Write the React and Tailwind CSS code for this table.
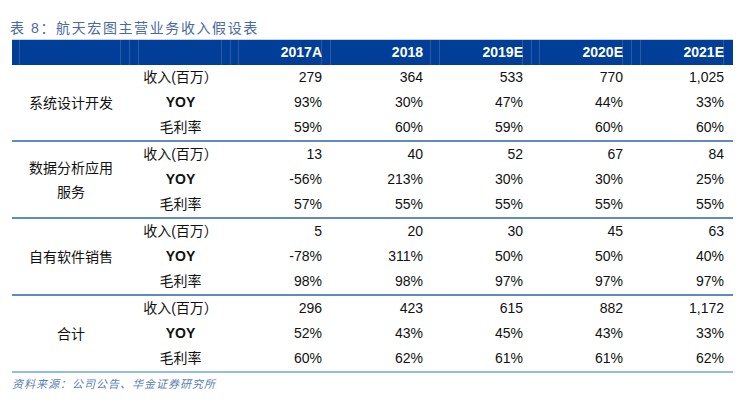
import React from "react";

const years = ["2017A", "2018", "2019E", "2020E", "2021E"];

const groups = [
  {
    name: ["系统设计开发"],
    rows: [
      ["279", "364", "533", "770", "1,025"],
      ["93%", "30%", "47%", "44%", "33%"],
      ["59%", "60%", "59%", "60%", "60%"],
    ],
  },
  {
    name: ["数据分析应用", "服务"],
    rows: [
      ["13", "40", "52", "67", "84"],
      ["-56%", "213%", "30%", "30%", "25%"],
      ["57%", "55%", "55%", "55%", "55%"],
    ],
  },
  {
    name: ["自有软件销售"],
    rows: [
      ["5", "20", "30", "45", "63"],
      ["-78%", "311%", "50%", "50%", "40%"],
      ["98%", "98%", "97%", "97%", "97%"],
    ],
  },
  {
    name: ["合计"],
    rows: [
      ["296", "423", "615", "882", "1,172"],
      ["52%", "43%", "45%", "43%", "33%"],
      ["60%", "62%", "61%", "61%", "62%"],
    ],
    last: true,
  },
];

// 数据列宽度（与表头对齐）
const colW = ["w-[100px]", "w-[101px]", "w-[100px]", "w-[100px]", "w-[101px]"];

// 表头里的细竖线（Excel 导出的残留格子）
const headCells = [8, 101, 9, 9, 83, 9, 8, 83, 9, 100, 9, 83, 9, 8, 83, 9, 9, 83, 9];

function Metric({ i }) {
  if (i === 0) return <span>收入(百万）</span>;
  if (i === 1) return <span className="font-bold">YOY</span>;
  return <span>毛利率</span>;
}

export default function App() {
  return (
    <div
      className="w-[743px] h-[407px] bg-white text-[14px] text-[#111]"
      style={{ fontFamily: '"Liberation Sans", Arial, "Noto Sans CJK SC", sans-serif' }}
    >
      <div className="pt-[20px] pl-[10px] h-[39px] text-[14px] leading-[16px] text-[#4a6aa0] tracking-[1.6px]">
        表 8：航天宏图主营业务收入假设表
      </div>

      <div className="ml-[12px] w-[721px]">
        {/* 表头 */}
        <div className="relative h-[26px] bg-[#003e97] border-t border-[#c9d1e0]">
          <div className="absolute inset-0 flex">
            {headCells.map((w, i) => (
              <div
                key={i}
                className="h-full border-r border-[#2a5aa6] last:border-r-0"
                style={{ width: w }}
              />
            ))}
          </div>
          <div className="relative flex h-full items-center font-bold text-white">
            <div className="w-[219px]" />
            {years.map((y, i) => (
              <div key={y} className={`${colW[i]} text-right pr-[9px]`}>
                {y}
              </div>
            ))}
          </div>
        </div>

        {/* 表体 */}
        {groups.map((g, gi) => (
          <div
            key={gi}
            className={`flex border-b-2 ${g.last ? "border-[#95bce2]" : "border-[#5f8ac4]"}`}
          >
            <div className="w-[118px] flex flex-col items-center justify-center leading-[24px]">
              {g.name.map((n) => (
                <div key={n}>{n}</div>
              ))}
            </div>
            <div className="flex flex-col">
              {g.rows.map((r, ri) => (
                <div key={ri} className="flex h-[25px] items-center pb-[1px]">
                  <div className="w-[101px] text-center">
                    <Metric i={ri} />
                  </div>
                  {r.map((v, vi) => (
                    <div key={vi} className={`${colW[vi]} text-right pr-[9px]`}>
                      {v}
                    </div>
                  ))}
                </div>
              ))}
            </div>
          </div>
        ))}

        <div className="pt-[3px] text-[11px] italic text-[#5a7fb6] tracking-[1px]">
          资料来源：公司公告、华金证券研究所
        </div>
      </div>
    </div>
  );
}
